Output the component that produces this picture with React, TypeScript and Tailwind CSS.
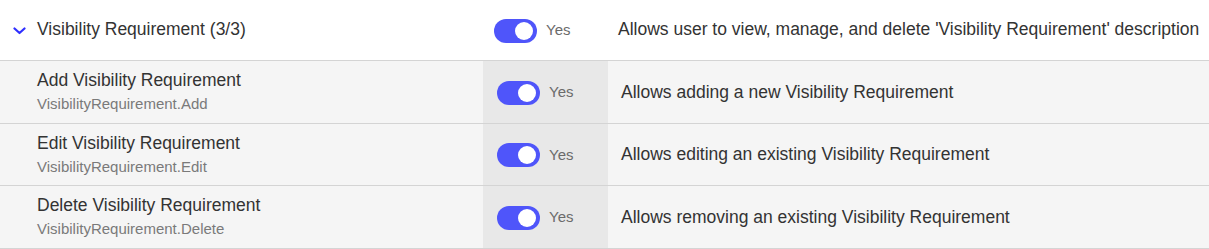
import React from "react";

function Toggle() {
  return (
    <div className="relative h-6 w-[43px] shrink-0 rounded-full bg-[#4f55fa]">
      <div className="absolute right-[4px] top-[3px] h-[18px] w-[18px] rounded-full bg-white" />
    </div>
  );
}

const rows = [
  {
    title: "Add Visibility Requirement",
    key: "VisibilityRequirement.Add",
    desc: "Allows adding a new Visibility Requirement",
    h: "h-[62px]",
  },
  {
    title: "Edit Visibility Requirement",
    key: "VisibilityRequirement.Edit",
    desc: "Allows editing an existing Visibility Requirement",
    h: "h-[61px]",
  },
  {
    title: "Delete Visibility Requirement",
    key: "VisibilityRequirement.Delete",
    desc: "Allows removing an existing Visibility Requirement",
    h: "h-[62px]",
  },
];

export default function App() {
  return (
    <div
      className="w-[1209px] h-[249px] overflow-hidden bg-white text-[#333333]"
      style={{ fontFamily: '"Liberation Sans", Arial, sans-serif' }}
    >
      <div className="flex h-[61px] items-center border-b border-[#d4d4d4] bg-white">
        <div className="flex w-[483px] shrink-0 items-center pl-[13px]">
          <svg width="13" height="8" viewBox="0 0 13 8" className="mt-[2px]">
            <path d="M1.5 1.5 L6.5 6 L11.5 1.5" fill="none" stroke="#2f2fff" strokeWidth="2.2" strokeLinecap="round" strokeLinejoin="round" />
          </svg>
          <span className="ml-[11px] text-[17.5px] leading-none">Visibility Requirement (3/3)</span>
        </div>
        <div className="flex w-[125px] shrink-0 items-center gap-[9px] pl-[11px] pt-[1px]">
          <Toggle />
          <span className="text-[15px] text-[#6b6b6b]">Yes</span>
        </div>
        <div className="pl-[10px] text-[17.5px] leading-none whitespace-nowrap">
          Allows user to view, manage, and delete 'Visibility Requirement' description
        </div>
      </div>
      {rows.map((r) => (
        <div key={r.key} className={`flex ${r.h} box-content items-stretch border-b border-[#d4d4d4] bg-[#f5f5f5]`}>
          <div className="flex w-[483px] shrink-0 flex-col justify-center pl-[37px] pb-[1px]">
            <div className="text-[17.5px] leading-[20px]">{r.title}</div>
            <div className="mt-[5px] text-[15px] leading-[18px] text-[#7a7a7a]">{r.key}</div>
          </div>
          <div className="flex w-[125px] shrink-0 items-center gap-[9px] bg-[#e8e8e8] pl-[14px] pt-[1px]">
            <Toggle />
            <span className="text-[15px] text-[#6b6b6b]">Yes</span>
          </div>
          <div className="flex items-center pl-[13px] text-[17.5px] whitespace-nowrap">{r.desc}</div>
        </div>
      ))}
    </div>
  );
}
